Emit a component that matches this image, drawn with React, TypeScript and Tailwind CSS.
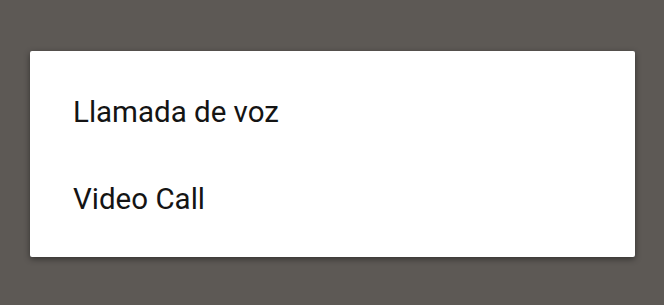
export default function App() {
  const options = ["Llamada de voz", "Video Call"];

  return (
    <div className="h-[305px] w-[664px] overflow-hidden bg-[#5d5955] pl-[30px] pt-[51px]">
      <div className="w-[605px] rounded-[2px] bg-white pb-[14px] pt-[18px] shadow-[0_2px_6px_rgba(0,0,0,0.45)]">
        {options.map((label) => (
          <div
            key={label}
            className="flex h-[87px] items-center pl-[43px] font-['Roboto',sans-serif] text-[29.5px] leading-none text-[#141414]"
          >
            {label}
          </div>
        ))}
      </div>
    </div>
  );
}
